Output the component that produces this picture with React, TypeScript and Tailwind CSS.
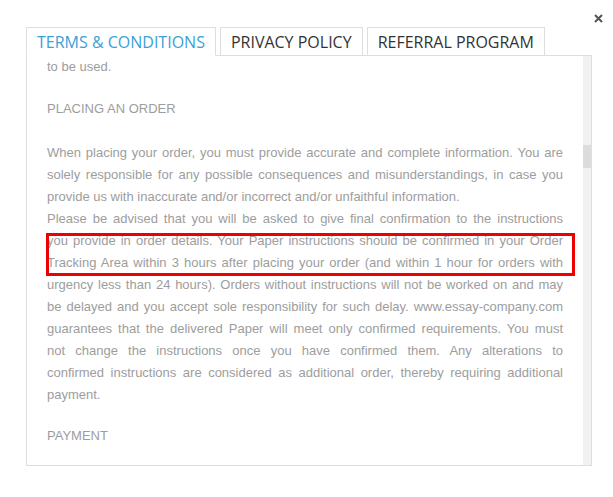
import { useState } from 'react'

const tabs = ['TERMS & CONDITIONS', 'PRIVACY POLICY', 'REFERRAL PROGRAM']

// lines as they break in the modal, so the justified wrap stays the same
const orderLines = [
  'When placing your order, you must provide accurate and complete information. You are',
  'solely responsible for any possible consequences and misunderstandings, in case you',
  'provide us with inaccurate and/or incorrect and/or unfaithful information.',
  'Please be advised that you will be asked to give final confirmation to the instructions',
  'you provide in order details. Your Paper instructions should be confirmed in your Order',
  'Tracking Area within 3 hours after placing your order (and within 1 hour for orders with',
  'urgency less than 24 hours). Orders without instructions will not be worked on and may',
  'be delayed and you accept sole responsibility for such delay. www.essay-company.com',
  'guarantees that the delivered Paper will meet only confirmed requirements. You must',
  'not change the instructions once you have confirmed them. Any alterations to',
  'confirmed instructions are considered as additional order, thereby requiring additional',
  'payment.',
]
const lastOfParagraph = [2, 11]

export default function App() {
  const [active, setActive] = useState(0)

  return (
    <div className="relative w-[613px] h-[497px] bg-white overflow-hidden">
      {/* close */}
      <button className="absolute left-[593px] top-[13px] w-[10px] h-[10px] flex items-center justify-center text-[#555]">
        <svg width="9" height="9" viewBox="0 0 9 9">
          <path d="M1 1L8 8M8 1L1 8" stroke="currentColor" strokeWidth="2" />
        </svg>
      </button>

      <div className="pt-[27px] pl-[26px]">
        {/* tabs */}
        <div className="flex items-end gap-[4px] font-['Open_Sans',sans-serif] text-[16px]">
          {tabs.map((t, i) => (
            <button
              key={t}
              onClick={() => setActive(i)}
              className={
                i === active
                  ? 'relative z-10 h-[29px] px-[10px] border border-[#dedede] border-b-white bg-white text-[#3c9fd6] leading-[28px]'
                  : 'relative h-[29px] px-[10px] border border-[#dedede] bg-white text-[#333] leading-[28px]'
              }
            >
              {t}
            </button>
          ))}
        </div>

        {/* panel */}
        <div className="-mt-px w-[566px] h-[411px] border border-[#dedede] flex">
          <div className="flex-1 overflow-hidden px-[20px] font-['Liberation_Sans',Arial,sans-serif] text-[13px] leading-[22px] text-[#9d9d9d]">
            <p>to be used.</p>
            <h4 className="mt-[20px] mb-[22px]">PLACING AN ORDER</h4>
            <div>
              {orderLines.map((l, i) => (
                <span
                  key={i}
                  className={
                    lastOfParagraph.includes(i)
                      ? 'block whitespace-nowrap'
                      : 'block whitespace-nowrap text-justify [text-align-last:justify]'
                  }
                >
                  {l}
                </span>
              ))}
            </div>
            <h4 className="mt-[19px] mb-[22px]">PAYMENT</h4>
          </div>
          {/* scrollbar */}
          <div className="w-[8px] bg-[#f1f1f1] pt-[89px]">
            <div className="h-[23px] bg-[#dcdcdc]" />
          </div>
        </div>
      </div>

      {/* highlight annotation */}
      <div className="absolute left-[46px] top-[233px] w-[529px] h-[43px] border-[3px] border-[#ee0000] pointer-events-none" />
    </div>
  )
}
